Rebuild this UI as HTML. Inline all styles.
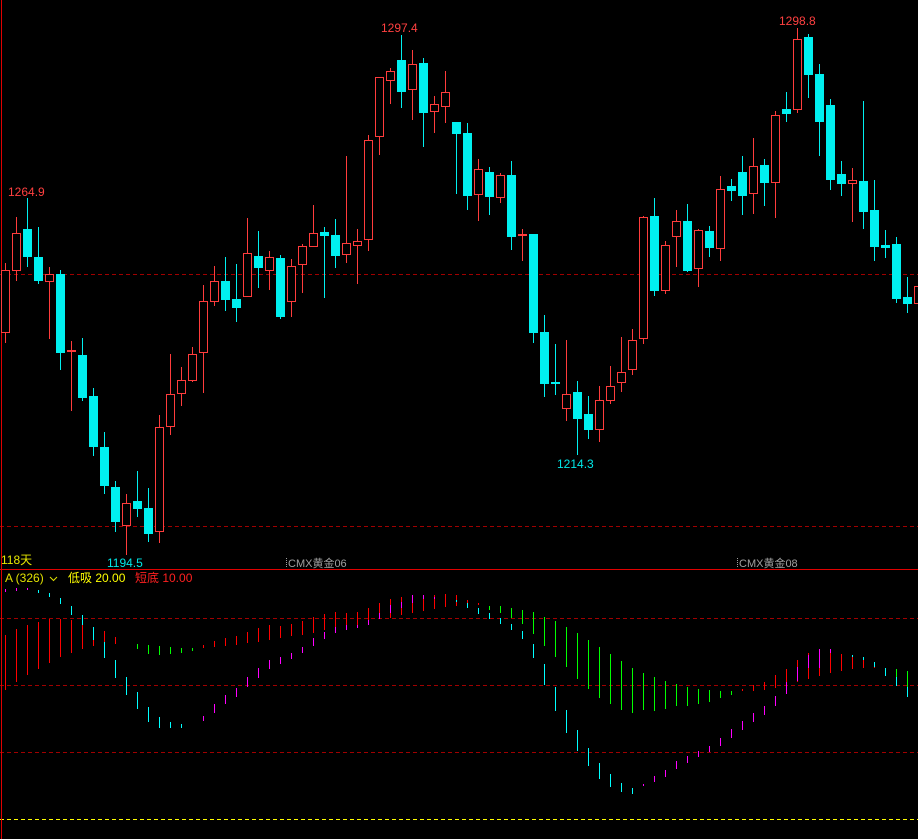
<!DOCTYPE html>
<html><head><meta charset="utf-8"><style>
html,body{margin:0;padding:0;background:#000;width:918px;height:839px;overflow:hidden}
svg{display:block}
text{font-family:"Liberation Sans","Noto Sans CJK SC",sans-serif;font-size:12px}
</style></head><body>
<svg id="s" width="918" height="839" xmlns="http://www.w3.org/2000/svg" shape-rendering="crispEdges">
<rect width="918" height="839" fill="#000"/>
<line x1="0" y1="274.5" x2="918" y2="274.5" stroke="#a00000" stroke-dasharray="4,3"/>
<line x1="0" y1="526.5" x2="918" y2="526.5" stroke="#a00000" stroke-dasharray="4,3"/>
<line x1="0" y1="618.5" x2="918" y2="618.5" stroke="#a00000" stroke-dasharray="4,3"/>
<line x1="0" y1="685.5" x2="918" y2="685.5" stroke="#a00000" stroke-dasharray="4,3"/>
<line x1="0" y1="752.5" x2="918" y2="752.5" stroke="#a00000" stroke-dasharray="4,3"/>
<line x1="0" y1="819.5" x2="918" y2="819.5" stroke="#ffff00" stroke-dasharray="4,3"/>
<line x1="0" y1="569.5" x2="918" y2="569.5" stroke="#e00000"/>
<line x1="1.5" y1="0" x2="1.5" y2="839" stroke="#e00000"/>
<g id="c"></g>
<g id="ind"></g>
<text x="8" y="196" fill="#ff4040">1264.9</text>
<text x="381" y="32" fill="#ff4040">1297.4</text>
<text x="779" y="25" fill="#ff4040">1298.8</text>
<text x="557" y="468" fill="#00e8e8">1214.3</text>
<text x="107" y="567" fill="#00e8e8">1194.5</text>
<text x="1" y="564" fill="#e8e800">118天</text>
<line x1="286.5" y1="558" x2="286.5" y2="568" stroke="#a0a0a0" stroke-dasharray="1,1"/>
<text x="288" y="567" fill="#a0a0a0" font-size="11" style="font-size:11px">CMX黄金06</text>
<line x1="737.5" y1="558" x2="737.5" y2="568" stroke="#a0a0a0" stroke-dasharray="1,1"/>
<text x="739" y="567" fill="#a0a0a0" style="font-size:11px">CMX黄金08</text>
<text x="5" y="582" fill="#e0e000">A (326)</text>
<path d="M50 577 l3.5 3.5 l3.5 -3.5" stroke="#e0e000" fill="none" shape-rendering="auto"/>
<text x="68" y="582" fill="#ffff00">低吸 20.00</text>
<text x="135" y="582" fill="#ff2020">短底 10.00</text>
</svg>
<script>
var C=[[1,270,333,263,343],[1,233,271,217,281],[0,229,257,198,267],[0,257,281,227,284],[1,274,282,267,339],[0,274,353,270,370],[1,350,351,341,411],[0,355,398,338,401],[0,396,447,388,456],[0,447,486,432,494],[0,487,522,481,532],[1,503,526,494,555],[0,501,509,471,517],[0,508,534,488,542],[1,427,532,415,543],[1,394,427,354,435],[1,380,394,367,406],[1,354,381,347,382],[1,301,353,285,393],[1,281,302,266,306],[0,281,300,257,311],[0,299,308,264,322],[1,253,297,218,297],[0,256,268,231,288],[1,257,271,251,290],[0,258,317,255,319],[1,266,302,259,317],[1,246,265,244,293],[1,233,247,205,247],[0,232,236,227,298],[0,235,256,219,268],[1,243,255,156,263],[1,241,246,229,284],[1,140,240,135,251],[1,77,137,77,155],[1,71,81,68,104],[0,60,92,35,108],[1,64,90,50,120],[0,63,113,58,147],[1,104,112,96,133],[1,92,107,71,123],[0,122,134,122,194],[0,133,196,123,210],[1,169,195,159,221],[0,172,197,167,215],[1,175,198,173,203],[0,175,237,161,250],[1,234,236,229,261],[0,234,333,234,343],[0,332,384,315,397],[0,382,384,344,395],[1,394,409,340,421],[0,392,419,381,455],[0,414,430,396,439],[1,400,430,386,442],[1,386,401,366,404],[1,372,383,337,392],[1,340,370,329,375],[1,217,339,216,344],[0,216,291,198,296],[1,245,291,241,294],[1,221,237,210,267],[0,221,271,204,272],[1,230,269,229,287],[0,231,248,226,257],[1,189,249,176,261],[0,186,191,179,201],[0,172,196,156,215],[1,166,194,138,214],[0,165,183,159,206],[1,115,183,111,218],[0,109,114,92,122],[1,39,110,28,113],[0,37,75,34,98],[0,74,122,64,156],[0,105,180,99,190],[0,174,184,161,196],[1,180,184,168,222],[0,181,212,101,229],[0,210,247,180,261],[0,245,248,230,258],[0,244,299,237,303],[0,297,304,277,313],[1,286,304,280,310]];
var NS="http://www.w3.org/2000/svg",g=document.getElementById("c"),h="";
C.forEach(function(d,i){var x=5+11*i,col=d[0]?"#ff3c3c":"#00f0f0";
h+='<line x1="'+(x+.5)+'" y1="'+d[3]+'" x2="'+(x+.5)+'" y2="'+d[4]+'" stroke="'+col+'"/>';
var hgt=Math.max(d[2]-d[1],1);
if(d[0])h+='<rect x="'+(x-3.5)+'" y="'+(d[1]+.5)+'" width="8" height="'+Math.max(hgt-1,1)+'" fill="#000" stroke="'+col+'"/>';
else h+='<rect x="'+(x-4)+'" y="'+d[1]+'" width="9" height="'+Math.max(hgt,2)+'" fill="'+col+'"/>';});
g.innerHTML=h;
var R="#ff0000",G="#00ff00",Cy="#00ffff",M="#ff00ff";
var I=[[0,635,689,R],[0,589,591,M],[1,629,681,R],[1,588,590,M],[2,625,674,R],[2,588,589,M],[3,622,668,R],[3,590,592,Cy],[4,619,662,R],[4,593,596,Cy],[5,619,656,R],[5,598,603,Cy],[6,620,652,R],[6,606,614,Cy],[7,615,625,Cy],[7,625,648,R],[8,627,640,Cy],[8,640,645,R],[9,631,642,R],[9,642,657,Cy],[10,637,643,R],[10,660,677,Cy],[11,677,694,Cy],[12,644,648,G],[12,692,708,Cy],[13,645,653,G],[13,707,721,Cy],[14,646,654,G],[14,717,727,Cy],[15,647,653,G],[15,722,727,Cy],[16,648,652,G],[16,724,727,Cy],[17,648,650,G],[18,645,647,R],[18,716,720,M],[19,641,646,R],[19,704,712,M],[20,638,645,R],[20,695,703,M],[21,636,644,R],[21,688,696,M],[22,632,642,R],[22,677,686,M],[23,628,641,R],[23,668,677,M],[24,625,639,R],[24,660,668,M],[25,626,637,R],[25,657,663,M],[26,624,635,R],[26,653,658,M],[27,621,634,R],[27,647,652,M],[28,617,632,R],[28,638,645,M],[29,614,629,R],[29,632,638,M],[30,612,627,R],[30,627,632,M],[31,613,625,R],[31,625,629,M],[32,612,624,R],[32,625,627,M],[33,608,620,R],[33,620,624,M],[34,603,615,R],[34,613,618,M],[35,599,617,R],[35,605,612,M],[36,597,614,R],[36,602,607,M],[37,595,612,R],[37,595,602,M],[38,595,610,R],[38,595,598,M],[39,595,608,R],[39,597,598,M],[40,594,606,R],[41,595,605,R],[41,600,601,Cy],[42,600,607,R],[42,603,607,Cy],[43,603,604,R],[43,608,613,Cy],[44,606,609,G],[44,613,618,Cy],[45,606,612,G],[45,618,623,Cy],[46,608,617,G],[46,624,629,Cy],[47,610,623,G],[47,631,638,Cy],[48,612,633,G],[48,644,657,Cy],[49,617,645,G],[49,664,684,Cy],[50,621,656,G],[50,687,710,Cy],[51,627,666,G],[51,710,732,Cy],[52,633,678,G],[52,730,750,Cy],[53,640,688,G],[53,748,765,Cy],[54,647,697,G],[54,763,778,Cy],[55,654,703,G],[55,774,786,Cy],[56,661,709,G],[56,783,791,Cy],[57,668,712,G],[57,788,793,Cy],[58,673,709,G],[58,784,785,M],[59,677,710,G],[59,776,781,M],[60,681,708,G],[60,770,776,M],[61,684,705,G],[61,761,768,M],[62,687,705,G],[62,756,762,M],[63,689,703,G],[63,751,756,M],[64,690,701,G],[64,746,751,M],[65,691,697,G],[65,738,745,M],[66,691,694,G],[66,729,737,M],[67,689,690,R],[67,721,729,M],[68,685,690,R],[68,713,721,M],[69,682,689,R],[69,706,714,M],[70,675,687,R],[70,696,705,M],[71,669,682,R],[71,682,693,M],[72,660,681,R],[72,667,680,M],[73,653,678,R],[73,655,667,M],[74,649,675,R],[74,649,667,M],[75,649,672,R],[75,649,652,M],[76,654,670,R],[77,656,668,R],[77,655,656,Cy],[78,659,667,R],[78,657,659,Cy],[79,665,667,R],[79,662,666,Cy],[80,668,675,Cy],[81,669,677,G],[81,677,685,Cy],[82,671,686,G],[82,687,696,Cy]];
var k="";I.forEach(function(d){var x=5.5+11*d[0];k+='<line x1="'+x+'" y1="'+d[1]+'" x2="'+x+'" y2="'+(d[2]+1)+'" stroke="'+d[3]+'"/>';});
document.getElementById("ind").innerHTML=k;
</script>
</body></html>
